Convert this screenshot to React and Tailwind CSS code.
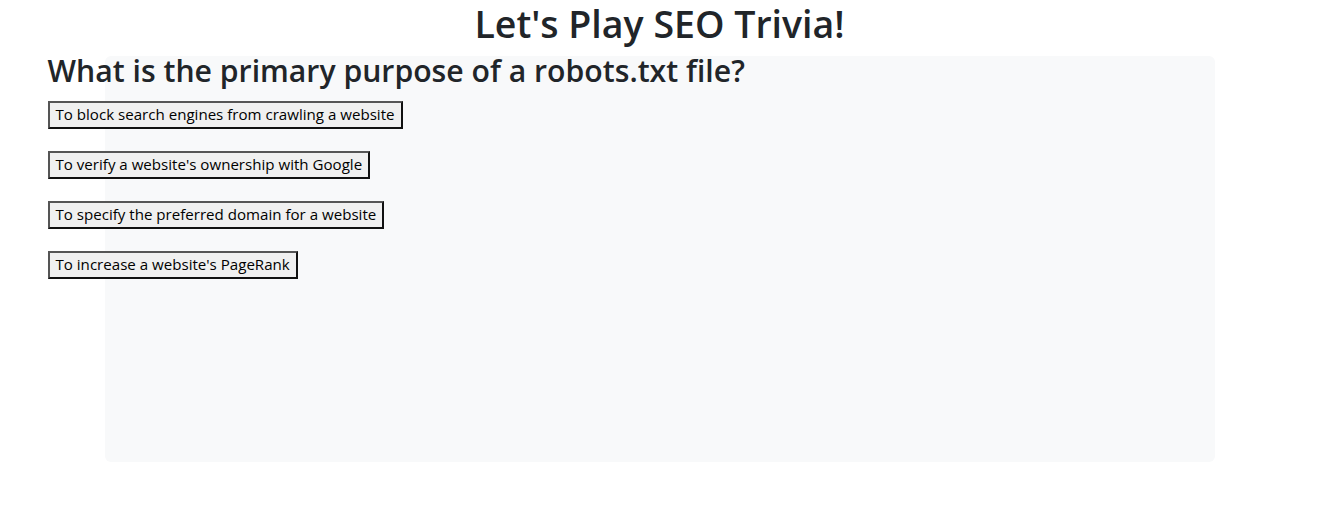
import React from 'react';

const answers = [
    'To block search engines from crawling a website',
    "To verify a website's ownership with Google",
    'To specify the preferred domain for a website',
    "To increase a website's PageRank",
];

const App = () => {
    return (
        <div className="min-h-[520px] bg-white text-[#212529] font-['Open_Sans',sans-serif]">
            <h1 className="text-center text-[37.5px] font-semibold leading-[48px] mb-2">
                Let's Play SEO Trivia!
            </h1>
            <div className="w-[1110px] mx-auto">
                <div className="h-[406px] bg-[#f8f9fa] rounded-md">
                    {/* Pregunta */}
                    <div className="-ml-[57px]">
                        <h2 className="text-[30.2px] font-semibold leading-[30px] mb-[15px]">
                            What is the primary purpose of a robots.txt file?
                        </h2>
                        <div className="flex flex-col items-start gap-[22px]">
                            {answers.map((answer) => (
                                <button
                                    key={answer}
                                    type="button"
                                    className="h-[28px] px-[6px] bg-[#f0f0f0] text-[15.1px] leading-none text-black border-2 border-t-[#555] border-l-[#555] border-b-[#111] border-r-[#111]"
                                >
                                    {answer}
                                </button>
                            ))}
                        </div>
                    </div>
                </div>
            </div>
        </div>
    );
};

export default App;
